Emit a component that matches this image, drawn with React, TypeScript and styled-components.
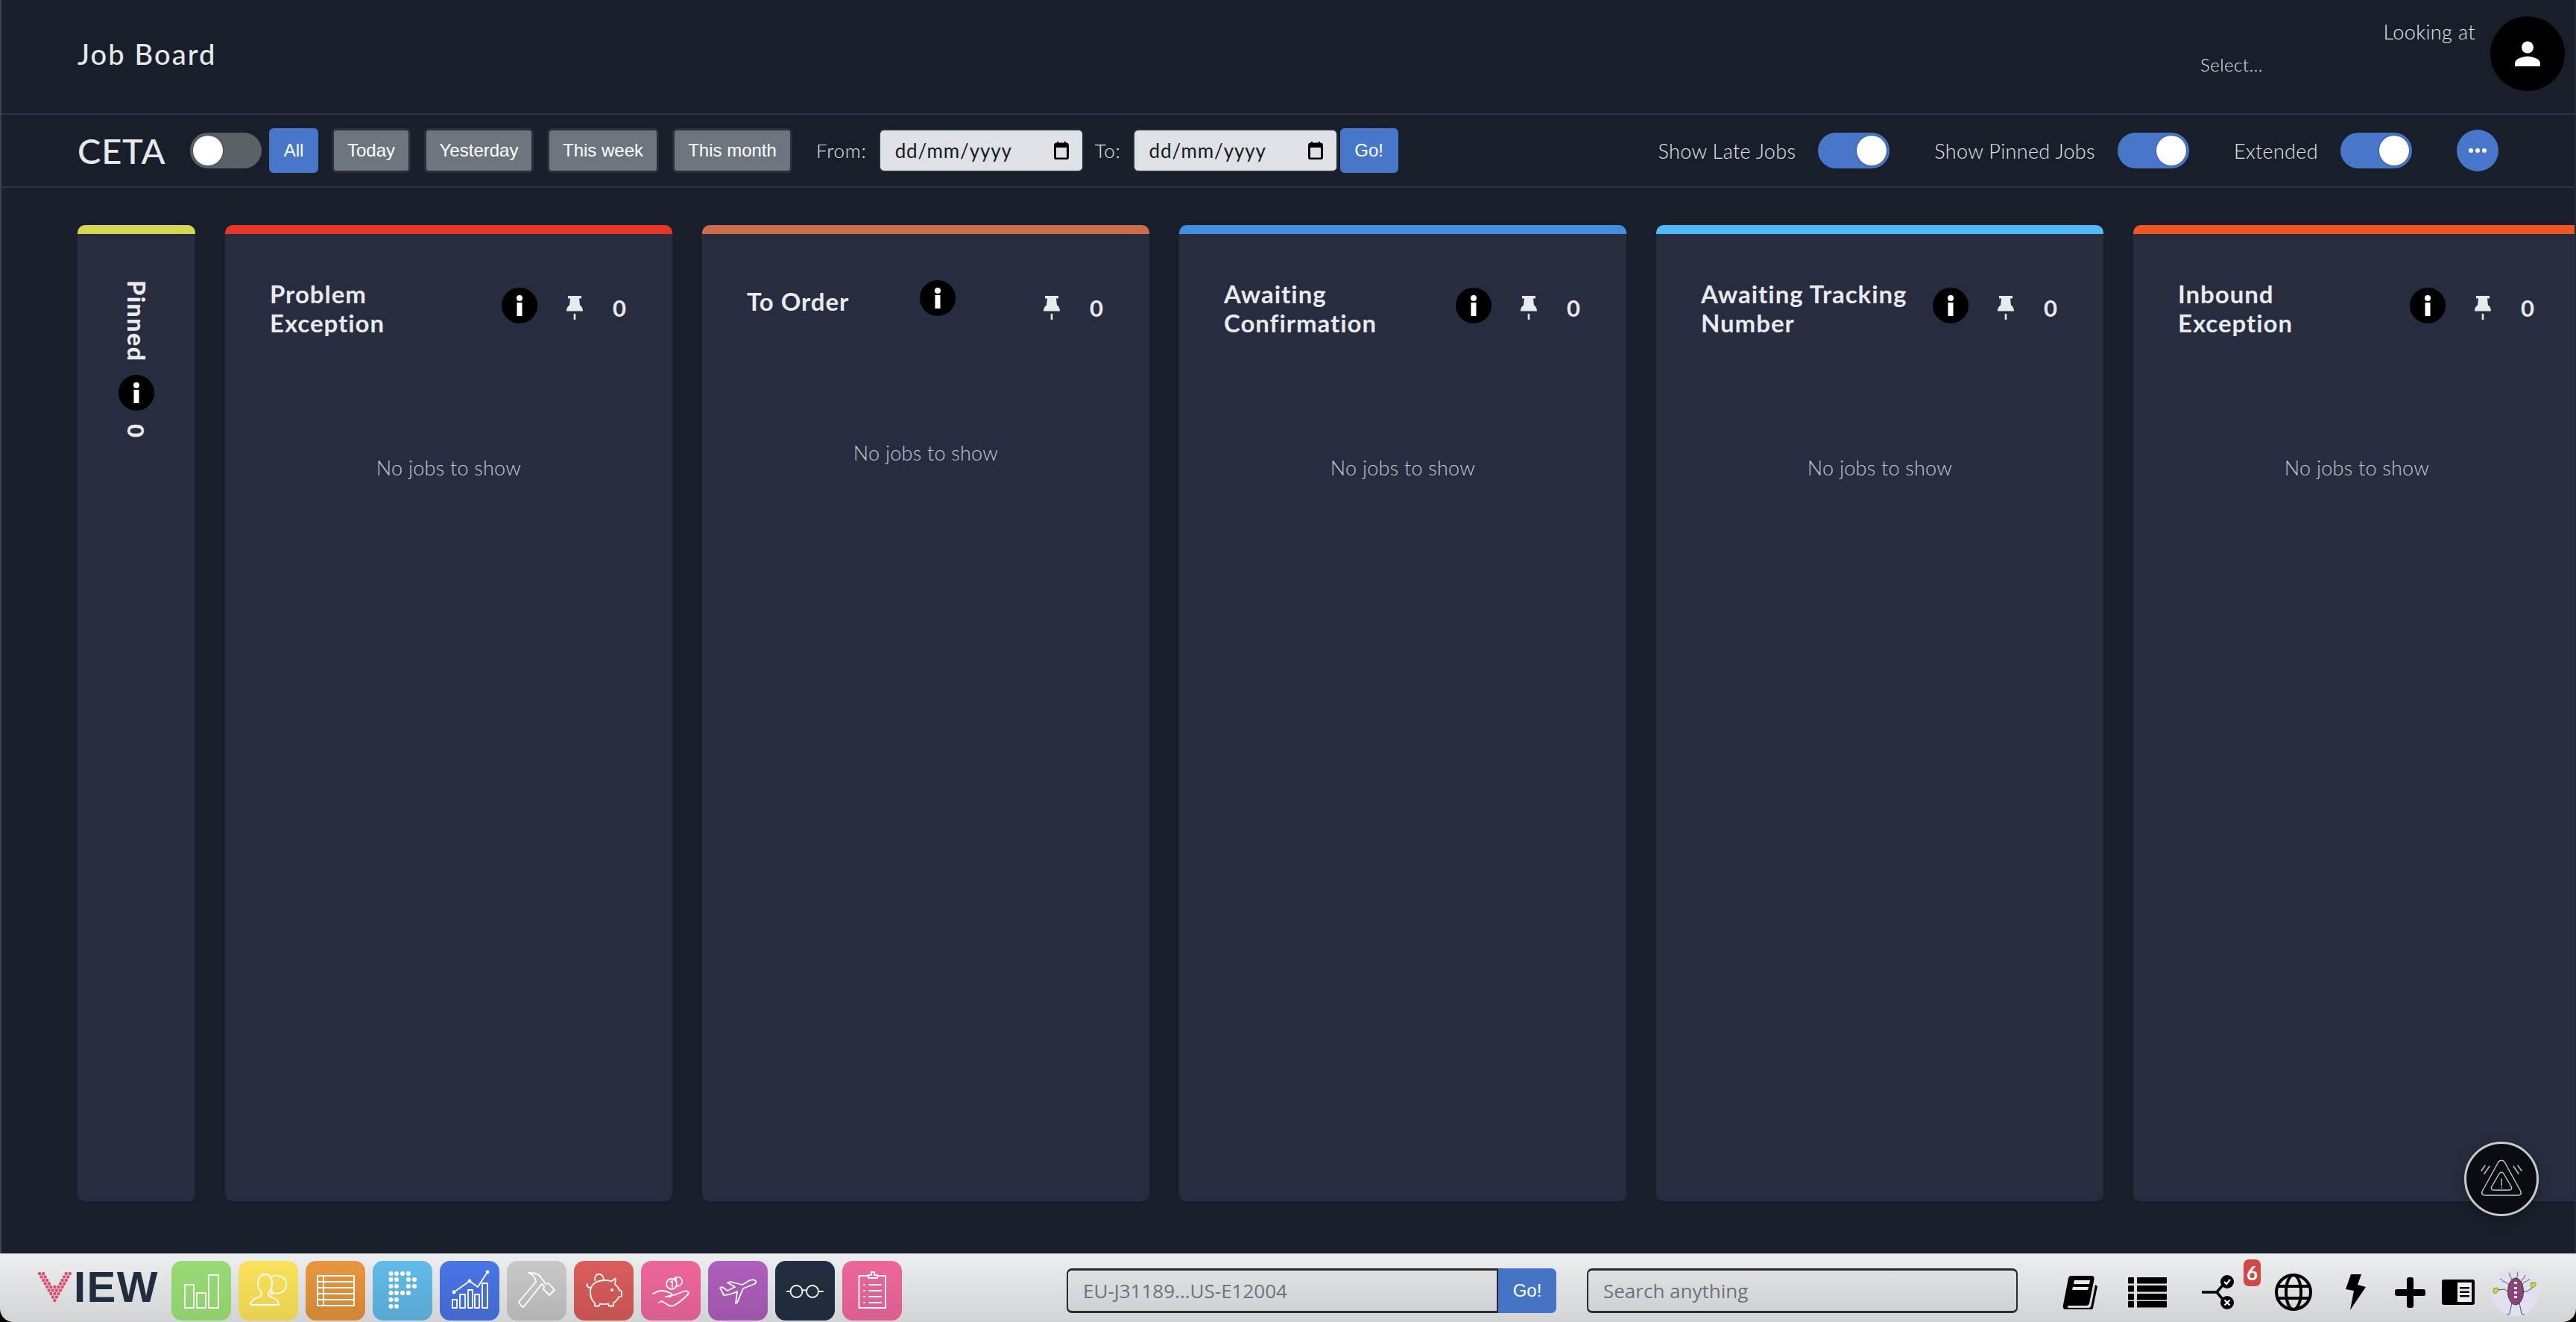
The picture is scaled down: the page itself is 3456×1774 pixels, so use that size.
import React from "react";
import styled, { createGlobalStyle } from "styled-components";

const Global = createGlobalStyle`
  html, body { margin: 0; padding: 0; background: #000; overflow: hidden; }
  * { box-sizing: border-box; }
  body { font-family: "Lato", "Liberation Sans", sans-serif; }
`;

const Page = styled.div`
  width: 3456px; height: 1774px; display: flex; flex-direction: column; overflow: hidden; position: relative;
`;
const Main = styled.div`
  height: 1682px; flex: none; background: #181f2a; color: #e9eaee;
  border-left: 2px solid #3d414d; border-right: 2px solid #232a36;
  display: flex; flex-direction: column;
`;
const Header = styled.header`
  height: 154px; flex: none; border-bottom: 2px solid #2e3248;
  display: flex; align-items: flex-start; justify-content: space-between; padding: 0 13px 0 102px;
`;
const PageTitle = styled.h1`
  margin: 50px 0 0; font-size: 38px; line-height: 44px; font-weight: 500; letter-spacing: 2.1px; color: #e6e7ea;
`;
const HeaderRight = styled.div`
  display: flex; align-items: flex-start; gap: 20px; padding-top: 22px;
`;
const Looking = styled.div`
  width: 369px; display: flex; flex-direction: column; font-weight: 300; color: #e4e5e8;
`;
const LookingLabel = styled.div`
  font-size: 27px; line-height: 34px; text-align: right; letter-spacing: .4px; margin-top: 4px;
`;
const SelectText = styled.div`
  font-size: 24px; line-height: 30px; margin: 12px 0 0 0; letter-spacing: .5px;
`;
const Avatar = styled.div`
  width: 100px; height: 100px; border-radius: 50%; background: #000; display: flex; align-items: center; justify-content: center;
`;
const Toolbar = styled.div`
  height: 98px; flex: none; border-bottom: 2px solid #2e3248; display: flex; align-items: center; padding: 0 102px;
`;
const Brand = styled.div`
  font-size: 47px; font-weight: 500; color: #e6e7ea; width: 151px; letter-spacing: .8px; flex: none;
`;
const Toggle = styled.div<{ $on?: boolean }>`
  width: 96px; height: 48px; border-radius: 24px; flex: none; padding: 4px;
  background: ${(p) => (p.$on ? "#4876c8" : "#5a6268")};
  display: flex; justify-content: ${(p) => (p.$on ? "flex-end" : "flex-start")};
  &::after { content: ""; width: 40px; height: 40px; border-radius: 50%; background: #fff; box-shadow: 0 0 3px rgba(0,0,0,.4); }
`;
const Range = styled.div`
  display: flex; gap: 18px; margin-left: 10px; align-items: center;
`;
const Btn = styled.div<{ $active?: boolean; $w: number }>`
  font-family: "Liberation Sans", Arial, sans-serif; font-size: 24px; color: #fff; height: 60px; width: ${(p) => p.$w}px; flex: none;
  display: flex; align-items: center; justify-content: center; border-radius: 6px;
  background: ${(p) => (p.$active ? "#4876c8" : "#6c757d")};
  border: ${(p) => (p.$active ? "0" : "3px solid #2b3037")};
`;
const FieldLabel = styled.div`
  font-size: 26px; font-weight: 300; margin: 0 16px 0 32px; letter-spacing: .8px; color: #e4e5e8;
`;
const ToLabel = styled(FieldLabel)`margin: 0 16px 0 15px;`;
const DateField = styled.div`
  width: 275px; height: 58px; background: #dee2e6; border-radius: 7px; border: 2px solid #282d34; flex: none;
  display: flex; align-items: center; justify-content: space-between; padding: 0 18px 0 20px;
  color: #16191d; font-size: 26px; font-weight: 400; letter-spacing: .9px;
`;
const GoBtn = styled.div`
  width: 78px; height: 60px; background: #4876c8; color: #fff; border-radius: 6px; margin-left: 3px; flex: none;
  display: flex; align-items: center; justify-content: center; font-family: "Liberation Sans", sans-serif; font-size: 24px;
`;
const ToolRight = styled.div`
  margin-left: auto; display: flex; align-items: center;
`;
const SwitchLabel = styled.div`
  font-size: 27px; font-weight: 300; color: #e4e5e8; margin: 0 30px 0 60px; letter-spacing: .35px;
`;
const MoreBtn = styled.div`
  width: 56px; height: 56px; border-radius: 50%; background: #4876c8; margin-left: 60px;
  display: flex; align-items: center; justify-content: center; gap: 3px;
`;
const MoreDot = styled.i`
  width: 6px; height: 6px; border-radius: 50%; background: #fff; display: block;
`;
const Board = styled.div`
  flex: 1; display: flex; gap: 40px; padding: 50px 0 70px 102px; overflow: hidden; min-height: 0;
`;
const Column = styled.section<{ $color: string; $narrow?: boolean }>`
  flex: none; width: ${(p) => (p.$narrow ? "158px" : "600px")}; background: #272d3e; border-radius: 10px; overflow: hidden;
  border-top: 12px solid ${(p) => p.$color};
  ${(p) => (p.$narrow ? "display:flex;flex-direction:column;align-items:center;padding-top:62px;" : "")}
`;
const PinnedTitle = styled.div`
  writing-mode: vertical-rl; font-size: 32px; font-weight: 900; line-height: 40px; height: 105px; letter-spacing: 1.6px; color: #e9eaee;
`;
const PinnedCount = styled.div`
  writing-mode: vertical-rl; font-size: 31px; font-weight: 900; line-height: 40px; margin-top: 18px; letter-spacing: 1px;
`;
const InfoWrap = styled.div<{ $top?: number }>`
  width: 48px; height: 48px; flex: none; margin-top: ${(p) => p.$top ?? 0}px;
`;
const ColHead = styled.div`
  display: flex; align-items: flex-start; padding: 61px 62px 0 60px;
`;
const ColTitle = styled.h2<{ $compact?: boolean }>`
  margin: ${(p) => (p.$compact ? "10px" : "0")} 0 0; width: ${(p) => (p.$compact ? "232px" : "311px")}; flex: none;
  font-size: 33px; line-height: 39px; font-weight: 700; color: #e9eaee; letter-spacing: .95px;
`;
const PinGroup = styled.div`
  margin-left: auto; display: flex; align-items: flex-start; gap: 39px; padding-top: 22px;
`;
const Count = styled.div`
  font-size: 31px; font-weight: 700; line-height: 32px; color: #e9eaee; width: 18px; text-align: center;
`;
const Empty = styled.div<{ $compact?: boolean }>`
  margin-top: ${(p) => (p.$compact ? "162px" : "158px")}; text-align: center; font-size: 27px; line-height: 34px;
  font-weight: 300; color: #c4c7cf; letter-spacing: .25px;
`;
const Dock = styled.footer`
  flex: 1; min-height: 0; border-radius: 0 0 18px 18px; background: linear-gradient(#eceef0, #d2d3d5);
  display: flex; align-items: flex-start; padding: 10px 0 0 50px; position: relative;
`;
const Logo = styled.div`
  width: 170px; flex: none; display: flex; align-items: center; gap: 2px; height: 70px;
`;
const LogoText = styled.span`
  font-family: "Liberation Sans", sans-serif; font-weight: 700; font-size: 58px; line-height: 58px; color: #1f2d3f; letter-spacing: 1.5px;
`;
const Tiles = styled.div`
  display: flex; gap: 10px; margin-left: 10px;
`;
const Tile = styled.div<{ $bg: string; $end: string }>`
  width: 80px; height: 80px; border-radius: 14px; flex: none; background: linear-gradient(${(p) => p.$bg}, ${(p) => p.$end});
  display: flex; align-items: center; justify-content: center; color: #fff;
`;
const TileIcon = styled.svg.attrs({ width: 80, height: 80, viewBox: "0 0 80 80", fill: "none" })`
  stroke: #fff; stroke-width: 1.800; stroke-linecap: round; stroke-linejoin: round; display: block;
`;
const SearchGroup = styled.div`
  display: flex; height: 60px; margin: 10px 0 0 221px; flex: none;
`;
const OrderInput = styled.div`
  width: 577px; border: 2px solid #2a2c30; border-width: 3px 2px 3px 2px; border-right: 0; border-radius: 7px 0 0 7px;
  background: linear-gradient(#dfe1e3, #cfd2d5); color: #6f7275; font-family: "Open Sans", sans-serif; font-size: 26px;
  display: flex; align-items: center; padding-left: 20px;
`;
const OrderGo = styled.div`
  width: 80px; background: #4574c4; color: #fff; border-left: 2px solid #2a2c30; border-radius: 0 7px 7px 0;
  display: flex; align-items: center; justify-content: center; font-family: "Liberation Sans", sans-serif; font-size: 24px;
`;
const SearchBox = styled(OrderInput)`
  width: 578px; border-right: 2px solid #2a2c30; border-radius: 7px; margin: 10px 0 0 41px; height: 60px; flex: none;
`;
const DockIcons = styled.div`
  position: relative; flex: none; margin-left: 60px; height: 82px; display: flex; align-items: center; padding-top: 2px;
`;
const IconSlot = styled.div<{ $left: number }>`
  margin-left: ${(p) => p.$left}px; display: flex; flex: none;
`;
const Badge = styled.div`
  position: absolute; left: 243px; top: -2px; width: 23px; height: 36px; border-radius: 7px; background: #cf4a45; color: #fff;
  font-weight: 700; font-size: 26px; display: flex; align-items: center; justify-content: center;
`;
const Fab = styled.div`
  position: absolute; left: 3306px; top: 1532px; width: 100px; height: 100px; border-radius: 50%; background: #0a0c11;
  border: 3px solid #c8c9cb; box-shadow: 0 4px 14px rgba(0,0,0,.25); display: flex; align-items: center; justify-content: center;
`;

const Info = () => (
  <svg width="48" height="48" viewBox="0 0 48 48">
    <circle cx="24" cy="24" r="24" fill="#000" />
    <circle cx="24" cy="14" r="4" fill="#fff" />
    <rect x="20.5" y="20" width="7" height="18" fill="#fff" />
  </svg>
);
const Pin = () => (
  <svg width="24" height="32" viewBox="0 0 24 32">
    <path d="M3 0h18v3.500h-3l1 9c2 1.500 4 3.500 4 8H1c0-4.500 2-6.500 4-8l1-9H3z" fill="#e9eaee" />
    <rect x="10.700" y="24" width="2.600" height="8" fill="#e9eaee" />
  </svg>
);
const Calendar = () => (
  <svg width="20" height="24" viewBox="0 0 20 24" fill="none">
    <rect x="1.500" y="3" width="17" height="20" rx="2" stroke="#000" strokeWidth="3" />
    <rect x="1" y="3" width="18" height="5" fill="#000" />
    <rect x="4" y="0" width="2" height="4" fill="#000" />
    <rect x="14" y="0" width="2" height="4" fill="#000" />
  </svg>
);
const Person = () => (
  <svg width="34" height="34" viewBox="0 0 34 34" fill="#fff">
    <circle cx="17" cy="8.500" r="8" />
    <path d="M0 34v-4c0-6 11-9.500 17-9.500S34 24 34 30v4z" />
  </svg>
);
const LogoV = () => {
  const pts: [number, number][] = [];
  const pat = [[0, 1, 7, 8], [0.5, 1.5, 6.5, 7.5], [1, 2, 6, 7], [1.5, 2.5, 5.5, 6.5], [2, 3, 4, 5, 6], [2.5, 3.5, 4.5, 5.5], [3, 4, 5], [3.5, 4.5], [4]];
  pat.forEach((r, y) => r.forEach((x) => pts.push([x, y])));
  return (
    <svg width="47" height="42" viewBox="0 0 47 42">
      {pts.map(([x, y], i) => (
        <circle key={i} cx={3 + x * 5.100} cy={3 + y * 4.500} r="2.200" fill="#de4c72" />
      ))}
    </svg>
  );
};
const TileBars = () => (
  <TileIcon><rect x="18" y="32" width="12" height="31" /><rect x="34" y="43" width="12" height="20" /><rect x="50" y="19" width="13" height="44" /></TileIcon>
);
const TilePeople = () => (
  <TileIcon>
    <path d="M16 59c0-5 4-8 10-10 4-1.500 5-4 5-6-3-3-5-8-5-14 0-7 5-11 10-11s9 4 9 11c0 6-2 11-5 14 0 3 1 5 5 6 6 2 9 5 9 10z" />
    <path d="M45 21c6-3 19-1 19 11 0 10-10 13-16 11l-4 2 1-6" />
  </TileIcon>
);
const TileTable = () => (
  <TileIcon><rect x="16" y="20" width="49" height="40" /><path d="M24 20v40M16 28h49M16 36h49M16 44h49M16 52h49" /></TileIcon>
);
const TileDots = () => {
  const xs = [24.5, 32, 40, 48, 56];
  const ys = [17, 25, 34, 43, 52, 61];
  const p = [[0, 1, 2, 3], [0, 1, 3, 4], [0, 1, 3, 4], [0, 1, 2, 3], [0, 1], [0, 1]];
  return (
    <svg width="80" height="80" viewBox="0 0 80 80" fill="#fff">
      {p.map((r, y) => r.map((x) => <circle key={`${x}-${y}`} cx={xs[x]} cy={ys[y]} r="3" />))}
    </svg>
  );
};
const TileGrowth = () => (
  <TileIcon>
    <rect x="17" y="52" width="6" height="11" /><rect x="27" y="45" width="7" height="18" /><rect x="38" y="39" width="6" height="24" /><rect x="47" y="45" width="6" height="18" /><rect x="57" y="30" width="7" height="33" />
    <path d="M19 42l21-15 11 8 13-20" />
    <circle cx="19" cy="42" r="1.500" fill="#fff" /><circle cx="40" cy="27" r="1.500" fill="#fff" /><circle cx="64" cy="15" r="1.500" fill="#fff" />
  </TileIcon>
);
const TileHammer = () => (
  <TileIcon>
    <path d="M29 16c7 0 12 1 15 4l6 8 2 3 4-1 8 9-7 7-8-8 1-4-3-3L23 61c-1 1-2 1-3 0l-3-4c-1-1-1-2 0-3L39 28c-1-4-2-9-10-12z" />
  </TileIcon>
);
const TilePiggy = () => (
  <TileIcon>
    <path d="M22 41c0-10 9-15 20-15 3 0 6 .5 8 1.500l6-4-1 8c3 2 5 5 6 8l3 1v7l-4 1c-1 3-4 6-7 8v4h-6l-1-3c-4 1-7 1-11 0l-1 3h-6v-4c-4-3-6-9-6-15z" />
    <path d="M28 26c-1-11 12-11 12 0M22 36c-4 0-5-3-4-5" />
    <circle cx="51" cy="39" r="1" fill="#fff" />
  </TileIcon>
);
const TileHand = () => (
  <TileIcon>
    <path d="M16 44c4-2 8-4 11-4 4 0 8 1 12 3 3 1 3 4 0 5h-6M37 47c6 0 13-3 20-6 5-2 8 1 6 4-6 6-13 12-19 15-3 1-5 1-8-1l-8-5-4 2" />
    <circle cx="41" cy="31" r="7" />
    <path d="M44 24.500a6 6 0 1 1 4 9M40 28l2-1v8M47 23v5" />
  </TileIcon>
);
const TilePlane = () => (
  <TileIcon>
    <path d="M64 27c-2-2-6-2-10 0l-8 5-16-4-4 1 10 6-10 5-7-5-3 1 5 10c6 0 12-2 18-5l-2 16 2-1 8-19 15-6c2-1 3-3 2-4z" />
  </TileIcon>
);
const TileGlasses = () => (
  <TileIcon>
    <circle cx="28.500" cy="41" r="8" /><circle cx="50" cy="41" r="8" />
    <path d="M16 41h4.500M58 41h6M36.500 40c1.500-1 4-1 5.500 0" />
  </TileIcon>
);
const TileClip = () => (
  <TileIcon>
    <path d="M35 20h-12.500v43H58V20H47" />
    <path d="M35 23v-4h4v-4h4v4h4v4z" />
    <path d="M29 32h1M36 32h16M29 40h1M36 40h16M29 48h1M36 48h16M29 56h1M36 56h16" />
  </TileIcon>
);
const Book = () => (
  <svg width="48" height="46" viewBox="0 0 48 46">
    <path d="M12 1h27c3 0 4 2 3.500 5L36 38c-.5 2-2 3-4 3H9c-3 0-3 3 0 3h26c2 0 3-1 3.500-3l5.500-28 3 2-6 29c-.5 2-2 3-4 3H6c-4 0-6-3-5-7L8 4c.5-2 2-3 4-3z" fill="#000" />
    <path d="M16 7h21l-1 5H15zM14 16h21l-1 4H13z" fill="#e9eaec" />
  </svg>
);
const ListIcon = () => (
  <svg width="52" height="41" viewBox="0 0 52 41" fill="#000">
    {[0, 11, 22, 32].map((y) => (
      <g key={y}><rect x="0" y={y} width="8" height="8.500" rx="1" /><rect x="12" y={y} width="40" height="8.500" rx="1" /></g>
    ))}
  </svg>
);
const Flow = () => (
  <svg width="44" height="46" viewBox="0 0 44 46">
    <path d="M0 23h20L32 9M20 23l12 14" stroke="#000" strokeWidth="3.500" fill="none" />
    <circle cx="34" cy="9" r="9" fill="#000" /><circle cx="34" cy="37" r="9" fill="#000" />
    <path d="M30 9l3 3 5-6M30.500 33.500l7 7M37.500 33.500l-7 7" stroke="#fff" strokeWidth="2.200" fill="none" />
  </svg>
);
const Globe = () => (
  <svg width="50" height="50" viewBox="0 0 50 50" fill="none" stroke="#000" strokeWidth="4">
    <circle cx="25" cy="25" r="23" /><ellipse cx="25" cy="25" rx="10" ry="23" /><path d="M3 17h44M3 33h44" />
  </svg>
);
const Bolt = () => (
  <svg width="27" height="48" viewBox="0 0 27 48"><path d="M7 0h14l-5 14 11 3L6 48l5-26-11-2z" fill="#000" /></svg>
);
const Plus = () => (
  <svg width="41" height="41" viewBox="0 0 41 41"><path d="M16 3a3 3 0 0 1 3-3h3a3 3 0 0 1 3 3v13h13a3 3 0 0 1 3 3v3a3 3 0 0 1-3 3H25v13a3 3 0 0 1-3 3h-3a3 3 0 0 1-3-3V25H3a3 3 0 0 1-3-3v-3a3 3 0 0 1 3-3h13z" fill="#000" /></svg>
);
const Panel = () => (
  <svg width="44" height="34" viewBox="0 0 44 34">
    <rect width="44" height="34" rx="3" fill="#000" /><rect x="21" y="4" width="19" height="26" fill="#eceef0" />
    <path d="M24 10h13v2.500H24zM24 15.500h13V18H24zM24 21h13v2.500H24z" fill="#000" />
  </svg>
);
const Bug = () => (
  <svg width="64" height="64" viewBox="0 0 64 64" fill="none">
    <ellipse cx="32" cy="32" rx="32" ry="32" fill="#dfe2ee" />
    <path d="M12 14c3 1 3 4 6 4s3 3 5 3 2 3 5 5M24 6c2 2 0 4 2 5s0 4 3 5M36 5c-2 2 1 4-1 6s1 4-1 6M46 9c-2 1-1 4-3 5s-1 4-4 5-1 4-3 6M52 15c-3 0-4 3-6 3s-2 2-5 5M9 29l9-1 7 5M57 25l-9 6-6 1M28 46l-3 15-4 1M38 46l3 15 4 1" stroke="#55515c" strokeWidth="1" />
    <ellipse cx="33" cy="31" rx="10.500" ry="18" fill="#8a4478" stroke="#4f3350" strokeWidth="1" />
    <path d="M3 32c0-6 2-8 3-4 1-3 5-3 4 1-1 4-5 6-7 3zM53 24c0-6 2-7 3-3 2-4 5-3 4 1-1 4-5 5-7 2z" fill="#d8cf3a" stroke="#77722a" strokeWidth=".7" />
    <rect x="31" y="18" width="4" height="3" fill="#eee" /><rect x="31" y="25" width="4" height="3" fill="#eee" /><rect x="31" y="31" width="4" height="3" fill="#eee" /><rect x="31" y="37" width="4" height="3" fill="#eee" />
  </svg>
);
const Alert = () => (
  <svg width="60" height="54" viewBox="0 0 60 54" fill="none" stroke="#c8c9cb" strokeWidth="1.400" strokeLinecap="round" strokeLinejoin="round">
    <path d="M25.500 5a5 5 0 0 1 9 0l21 38c2 4 0 6-4 6H8.500c-4 0-6-2-4-6z" />
    <path d="M27 20a3.500 3.500 0 0 1 6 0l10 17c1.500 3 .5 5-3 5H20c-3.500 0-4.500-2-3-5z" />
    <path d="M30 27v9M30 38.500v.5M3 16l5-7M7 20l7-10M52 9l5 7M46 10l7 10" />
  </svg>
);

const columns = [
  { lines: ["Problem", "Exception"], color: "#e93428" },
  { lines: ["To Order"], color: "#cb6d4d", compact: true },
  { lines: ["Awaiting", "Confirmation"], color: "#448ede" },
  { lines: ["Awaiting Tracking", "Number"], color: "#52b9fa" },
  { lines: ["Inbound", "Exception"], color: "#ee5626" },
];
const ranges = [
  { label: "All", w: 66, active: true },
  { label: "Today", w: 106 },
  { label: "Yesterday", w: 147 },
  { label: "This week", w: 150 },
  { label: "This month", w: 161 },
];

export default function App() {
  return (
    <Page>
      <Global />
      <Main>
        <Header>
          <PageTitle>Job Board</PageTitle>
          <HeaderRight>
            <Looking>
              <LookingLabel>Looking at</LookingLabel>
              <SelectText>Select...</SelectText>
            </Looking>
            <Avatar><Person /></Avatar>
          </HeaderRight>
        </Header>
        <Toolbar>
          <Brand>CETA</Brand>
          <Toggle />
          <Range>
            {ranges.map((r) => <Btn key={r.label} $w={r.w} $active={r.active}>{r.label}</Btn>)}
          </Range>
          <FieldLabel>From:</FieldLabel>
          <DateField>dd/mm/yyyy<Calendar /></DateField>
          <ToLabel>To:</ToLabel>
          <DateField>dd/mm/yyyy<Calendar /></DateField>
          <GoBtn>Go!</GoBtn>
          <ToolRight>
            <SwitchLabel>Show Late Jobs</SwitchLabel>
            <Toggle $on />
            <SwitchLabel>Show Pinned Jobs</SwitchLabel>
            <Toggle $on />
            <SwitchLabel>Extended</SwitchLabel>
            <Toggle $on />
            <MoreBtn><MoreDot /><MoreDot /><MoreDot /></MoreBtn>
          </ToolRight>
        </Toolbar>
        <Board>
          <Column $color="#d4d754" $narrow>
            <PinnedTitle>Pinned</PinnedTitle>
            <InfoWrap $top={22}><Info /></InfoWrap>
            <PinnedCount>0</PinnedCount>
          </Column>
          {columns.map((c) => (
            <Column key={c.lines.join(" ")} $color={c.color}>
              <ColHead>
                <ColTitle $compact={c.compact}>
                  {c.lines.map((l, i) => <React.Fragment key={l}>{i > 0 && <br />}{l}</React.Fragment>)}
                </ColTitle>
                <InfoWrap $top={c.compact ? 1 : 11}><Info /></InfoWrap>
                <PinGroup><Pin /><Count>0</Count></PinGroup>
              </ColHead>
              <Empty $compact={c.compact}>No jobs to show</Empty>
            </Column>
          ))}
        </Board>
      </Main>
      <Dock>
        <Logo><LogoV /><LogoText>IEW</LogoText></Logo>
        <Tiles>
          <Tile $bg="#98da74" $end="#8fcf6d"><TileBars /></Tile>
          <Tile $bg="#fbe25c" $end="#e6d04e"><TilePeople /></Tile>
          <Tile $bg="#e9963f" $end="#d08535"><TileTable /></Tile>
          <Tile $bg="#62bbe8" $end="#58a8d2"><TileDots /></Tile>
          <Tile $bg="#4975e8" $end="#4268cc"><TileGrowth /></Tile>
          <Tile $bg="#c8c8c8" $end="#b4b4b4"><TileHammer /></Tile>
          <Tile $bg="#dc5c5c" $end="#c45350"><TilePiggy /></Tile>
          <Tile $bg="#ee6698" $end="#d95f90"><TileHand /></Tile>
          <Tile $bg="#b05fbf" $end="#9c55a8"><TilePlane /></Tile>
          <Tile $bg="#232f40" $end="#1f2a3a"><TileGlasses /></Tile>
          <Tile $bg="#ee6698" $end="#d95f90"><TileClip /></Tile>
        </Tiles>
        <SearchGroup>
          <OrderInput>EU-J31189...US-E12004</OrderInput>
          <OrderGo>Go!</OrderGo>
        </SearchGroup>
        <SearchBox>Search anything</SearchBox>
        <DockIcons>
          <IconSlot $left={0}><Book /></IconSlot>
          <IconSlot $left={40}><ListIcon /></IconSlot>
          <IconSlot $left={47}><Flow /></IconSlot>
          <Badge>6</Badge>
          <IconSlot $left={54}><Globe /></IconSlot>
          <IconSlot $left={45}><Bolt /></IconSlot>
          <IconSlot $left={39}><Plus /></IconSlot>
          <IconSlot $left={22}><Panel /></IconSlot>
          <IconSlot $left={22}><Bug /></IconSlot>
        </DockIcons>
      </Dock>
      <Fab><Alert /></Fab>
    </Page>
  );
}
